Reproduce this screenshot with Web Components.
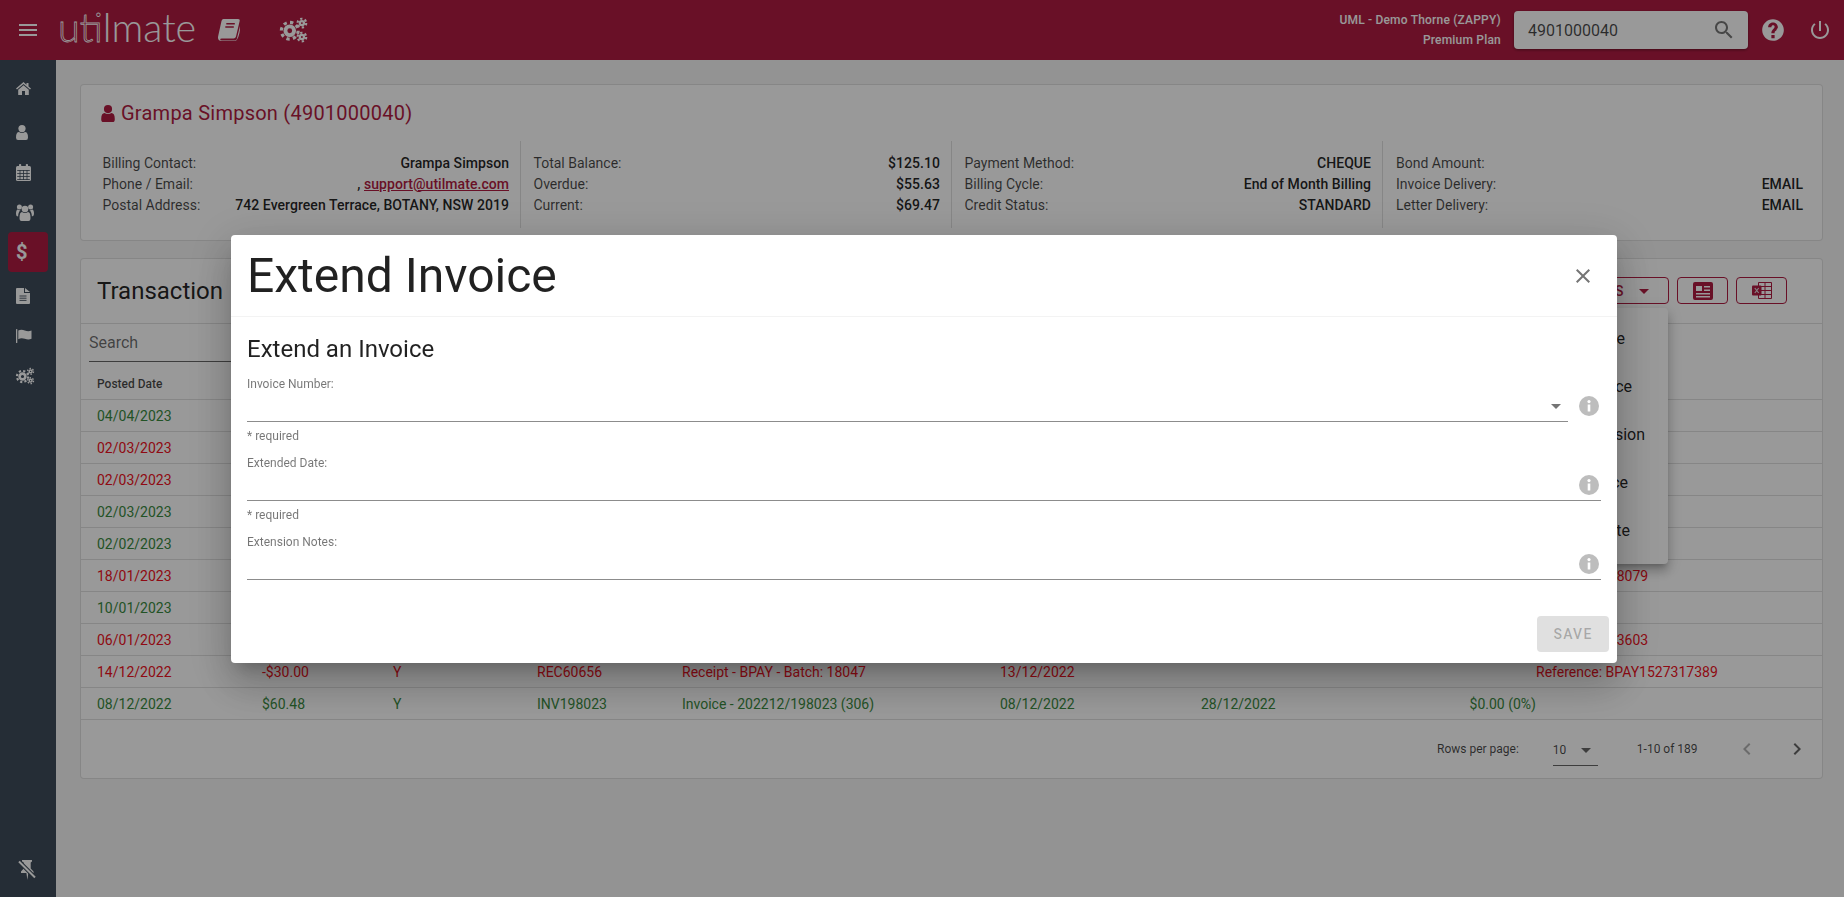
<!DOCTYPE html>
<html lang="en"><head><meta charset="utf-8"><title>Utilmate</title>
<style>
html,body{margin:0;height:100%;overflow:hidden;background:#f5f5f5;font-family:Roboto,"Liberation Sans",sans-serif;color:rgba(0,0,0,.87)}
</style></head><body>
<um-app></um-app>
<script>
const THEME='#b01c42', NAVBG='#3e4b5a';
const cog=(cx,cy,r,sw,tr,tw,n)=>{const c=2*Math.PI*tr,d=(c/n/2).toFixed(2);return `<circle cx="${cx}" cy="${cy}" r="${r}" fill="none" stroke="currentColor" stroke-width="${sw}"/><circle cx="${cx}" cy="${cy}" r="${tr}" fill="none" stroke="currentColor" stroke-width="${tw}" stroke-dasharray="${d} ${d}"/>`};
const ICONS={
menu:['0 0 24 24','<path d="M3 18h18v-2H3v2zm0-5h18v-2H3v2zm0-7v2h18V6H3z"/>'],
book:['0 0 22 22',`<path d="M5.500 0H20q2.200 0 1.600 2.200L18 17.500q-.5 2-2.500 2H3.800q-1.800 0-1.600 1 .2.900 1.600.9H17q1.300 0 1.800-1.400L22 7q.3 8-3 13.500-.8 1.500-2.500 1.500H3.500Q.3 22 0 19q-.1-1 .3-2.500L3.500 2Q4 0 5.500 0z"/><path d="M8.300 4.700h8.500M7.300 8h8.500" stroke="${THEME}" stroke-width="1.500" fill="none"/>`],
cogs:['0 0 18 16',cog(6.5,8.5,2.9,2.6,5.6,2.1,8)+cog(14.6,3.4,1.4,1.5,2.9,1.4,6)+cog(14.6,12.7,1.4,1.5,2.9,1.4,6)],
home:['0 0 15 13','<path d="M7.500 0 0 6.500l1 1L7.500 2 14 7.500l1-1-2.500-2.100V1h-2v1.700zM2.200 7.800V13H6V9h3v4h3.800V7.800L7.500 3.200z"/>'],
user:['0 0 12 15','<circle cx="6" cy="3.600" r="3.600"/><path d="M0 12.500Q0 7 3 7q1.200 1 3 1t3-1q3 0 3 5.500 0 2.500-2 2.500H2q-2 0-2-2.500z"/>'],
calendar:['0 0 15 17',`<rect y="2" width="15" height="15" rx="1.500"/><rect x="3" width="2.200" height="4" rx=".8"/><rect x="9.800" width="2.200" height="4" rx=".8"/><path d="M1.200 6.500h12.600M1.200 9.500h12.600M1.200 12.500h12.600M1.200 15.500h12.600M4 6v10M7.500 6v10M11 6v10" stroke="${NAVBG}" stroke-width=".8" fill="none"/>`],
users:['0 0 18 17','<circle cx="9" cy="5" r="3.300"/><circle cx="3.400" cy="3" r="2.500"/><circle cx="14.600" cy="3" r="2.500"/><path d="M3.500 14q0-6 2.500-6 1.300 1 3 1t3-1q2.500 0 2.500 6 0 3-2 3H5.500q-2 0-2-3z"/><path d="M0 10q0-4.500 1.800-4.500 1 .8 2.800.6-1 .9-1.600 2.100-.8 1.600-.9 4.300Q0 12.500 0 10zM18 10q0-4.500-1.800-4.500-1 .8-2.800.6 1 .9 1.600 2.100.8 1.600.9 4.300 2.100-.3 2.100-2.500z"/>'],
file:['0 0 14 16',`<path d="M0 1q0-1 1-1h7v5h6v10q0 1-1 1H1q-1 0-1-1zM9 0l5 4H9z"/><path d="M3.500 8h7M3.500 10.200h7M3.500 12.400h7" stroke="${NAVBG}" stroke-width=".9" fill="none"/>`],
flag:['0 0 16 14','<rect width="1.300" height="14" rx=".5"/><path d="M2.300 1.500q3-1.500 6.500 0t6.700 0v8.300q-3 1.500-6.700 0t-6.500.5z"/>'],
pin:['0 0 18 20',`<path d="M4 0h10v1.600l-1.300.8v6l2.800 3.200v1.300h-5.200L9.400 20l-1-7.100H3v-1.300l2.700-3.200v-6L4 1.600z"/><path d="M1 1.500l16 16" stroke="${NAVBG}" stroke-width="4" fill="none"/><path d="M1 1.500l16 16" stroke="currentColor" stroke-width="2" fill="none"/>`],
search:['0 0 24 24','<path d="M15.500 14h-.79l-.28-.27C15.410 12.590 16 11.110 16 9.500 16 5.910 13.090 3 9.500 3S3 5.910 3 9.500 5.910 16 9.500 16c1.610 0 3.090-.59 4.230-1.570l.27.28v.79l5 4.990L20.490 19l-4.990-5zm-6 0C7.010 14 5 11.990 5 9.500S7.010 5 9.500 5 14 7.010 14 9.500 11.990 14 9.500 14z"/>'],
help:['0 0 24 24','<path d="M12 2C6.480 2 2 6.480 2 12s4.480 10 10 10 10-4.480 10-10S17.520 2 12 2zm1.500 17.500h-3v-3h3v3zm2.070-7.750l-.9.920C13.450 13.400 13.500 14 13.500 15h-3v-.5c0-1.100.45-2.100 1.170-2.830l1.240-1.260c.37-.36.59-.86.59-1.410 0-1.100-.9-1.500-1.500-1.500s-1.500.4-1.500 2h-3c0-3.210 2.290-4.500 4.500-4.500s4.500 1.790 4.500 4.500c0 .88-.86 1.680-1.430 2.250z"/>'],
power:['0 0 24 24','<path d="M13 3h-2v10h2V3zm4.830 2.170l-1.420 1.420C17.990 7.860 19 9.810 19 12c0 3.870-3.130 7-7 7s-7-3.130-7-7c0-2.190 1.010-4.140 2.580-5.420L6.170 5.170C4.230 6.820 3 9.260 3 12c0 4.970 4.030 9 9 9s9-4.030 9-9c0-2.740-1.230-5.180-3.170-6.830z"/>'],
close:['0 0 24 24','<path d="M19 6.410L17.590 5 12 10.590 6.410 5 5 6.410 10.590 12 5 17.590 6.410 19 12 13.410 17.590 19 19 17.590 13.410 12z"/>'],
info:['0 0 20 20','<circle cx="10" cy="10" r="10" fill="#bdbdbd"/><circle cx="10" cy="5.600" r="1.600" fill="#fff"/><rect x="8.700" y="8.500" width="2.600" height="7" fill="#fff"/>'],
caret:['0 0 24 24','<path d="M7 10l5 5 5-5z"/>'],
chevl:['0 0 24 24','<path d="M15.410 7.410L14 6l-6 6 6 6 1.410-1.410L10.830 12z"/>'],
chevr:['0 0 24 24','<path d="M10 6L8.590 7.410 13.170 12l-4.580 4.580L10 18l6-6z"/>'],
news:['0 0 20 18','<path fill-rule="evenodd" d="M2 0h16q2 0 2 2v14q0 2-2 2H2q-2 0-2-2V2q0-2 2-2zm1 4v5h6V4zm8 0v1.500h6V4zm0 3.500V9h6V7.500zM3 11v1.500h14V11zm0 3v1.500h14V14z"/>'],
excel:['0 0 20 17','<path fill="none" stroke="currentColor" stroke-width="1" d="M6.500.5h13v16h-13zM6.500 4.500h13M6.500 8.500h13M6.500 12.500h13M13 .5v16"/><rect y="3.500" width="9.500" height="10" rx="1"/><path d="M2.800 6l3.900 5M6.700 6l-3.900 5" stroke="#ddd" stroke-width="1.200" fill="none"/>']
};
const def=(name,html,mixin={})=>{
  const t=document.createElement('template');t.innerHTML=html;
  customElements.define(name,class extends HTMLElement{
    constructor(){super();this.attachShadow({mode:'open'}).appendChild(t.content.cloneNode(true))}
    connectedCallback(){mixin.init&&mixin.init.call(this,this.shadowRoot)}
  });
};
def('um-icon','<style>:host{display:inline-flex;line-height:0;flex:none}svg{display:block;fill:currentColor;overflow:visible}</style><svg></svg>',{init(r){
  const s=r.querySelector('svg'),[vb,body]=ICONS[this.getAttribute('name')];
  s.setAttribute('viewBox',vb);s.setAttribute('width',this.getAttribute('w'));s.setAttribute('height',this.getAttribute('h')||this.getAttribute('w'));s.innerHTML=body;
}});
def('um-topbar',`<style>
:host{display:flex;align-items:center;height:60px;background:${THEME};color:#fff;box-sizing:border-box;font-family:Roboto,sans-serif}
.ham{margin-left:16px}
.logo{margin-left:18px;font:300 39.500px/60px Lato,sans-serif;letter-spacing:0;width:140px;height:60px;margin-top:-6px;white-space:nowrap;color:#fff}
.logo b{font-weight:300;color:transparent;-webkit-text-stroke:.8px #fff}
.book{margin-left:20px}.cogs{margin-left:40px}
.sp{flex:1}
.acct{text-align:right;font:500 12px/20px Roboto,sans-serif;letter-spacing:.2px;margin-right:13px}
.search{width:234px;height:38px;box-sizing:border-box;background:#fff;border-radius:4px;box-shadow:0 1px 3px rgba(0,0,0,.4);display:flex;align-items:center;padding:0 12px 0 14px;color:rgba(0,0,0,.72);font-size:16px}
.search span{flex:1}.search um-icon{color:#777}
.help{margin-left:12px}.pow{margin-left:22px;margin-right:12px}
</style>
<um-icon class="ham" name="menu" w="24"></um-icon>
<div class="logo"><b>uti</b>lmate</div>
<um-icon class="book" name="book" w="22"></um-icon>
<um-icon class="cogs" name="cogs" w="27" h="24"></um-icon>
<div class="sp"></div>
<div class="acct">UML - Demo Thorne (ZAPPY)<br>Premium Plan</div>
<div class="search"><span>4901000040</span><um-icon name="search" w="24"></um-icon></div>
<um-icon class="help" name="help" w="26"></um-icon>
<um-icon class="pow" name="power" w="24"></um-icon>`);
def('um-nav-item',`<style>
:host{display:flex;align-items:center;width:40px;height:40px;box-sizing:border-box;margin-left:8px;padding-left:8px;border-radius:4px;color:#fff}
:host([active]){background:${THEME}}
</style><slot></slot>`);
def('um-sidenav',`<style>
:host{display:flex;flex-direction:column;width:56px;background:${NAVBG};padding-top:8px;box-sizing:border-box;height:100%}
.sp{flex:1}.pin{margin:0 0 17px 18px;color:#fff}
</style><slot></slot><div class="sp"></div><um-icon class="pin" name="pin" w="18" h="20"></um-icon>`);
def('um-kv',`<style>
:host{display:flex;justify-content:space-between;font-size:14px;line-height:21px;color:rgba(0,0,0,.72);white-space:nowrap}
.v{font-weight:500;color:rgba(0,0,0,.87);letter-spacing:.05px}
</style><span><slot name="k"></slot></span><span class="v"><slot></slot></span>`);
def('um-info-col',`<style>
:host{display:block;box-sizing:border-box;padding:12px 11px 12px 12.500px;border-right:1px solid rgba(0,0,0,.12)}
:host(:last-child){border-right:0;padding-left:13px}
</style><slot></slot>`);
def('um-card',`<style>
:host{display:block;background:#fff;border:1px solid rgba(0,0,0,.12);border-radius:4px;box-sizing:border-box}
</style><slot></slot>`);
def('um-customer',`<style>
:host{display:block}
h2{margin:0;display:flex;align-items:center;gap:6px;padding:14px 0 0 20px;font:400 20px/28px Roboto,sans-serif;letter-spacing:.24px;color:${THEME}}
.g{display:grid;grid-template-columns:repeat(4,431px);margin:13.500px 0 12px 9px}
a{color:${THEME};text-decoration:underline}
</style>
<um-card>
<h2><um-icon name="user" w="14" h="17"></um-icon>Grampa Simpson (4901000040)</h2>
<div class="g">
<um-info-col>
<um-kv><span slot="k">Billing Contact:</span>Grampa Simpson</um-kv>
<um-kv><span slot="k">Phone / Email:</span>, <a>support@utilmate.com</a></um-kv>
<um-kv><span slot="k">Postal Address:</span>742 Evergreen Terrace, BOTANY, NSW 2019</um-kv>
</um-info-col>
<um-info-col>
<um-kv><span slot="k">Total Balance:</span>$125.10</um-kv>
<um-kv><span slot="k">Overdue:</span>$55.63</um-kv>
<um-kv><span slot="k">Current:</span>$69.47</um-kv>
</um-info-col>
<um-info-col>
<um-kv><span slot="k">Payment Method:</span>CHEQUE</um-kv>
<um-kv><span slot="k">Billing Cycle:</span>End of Month Billing</um-kv>
<um-kv><span slot="k">Credit Status:</span>STANDARD</um-kv>
</um-info-col>
<um-info-col>
<um-kv><span slot="k">Bond Amount:</span></um-kv>
<um-kv><span slot="k">Invoice Delivery:</span>EMAIL</um-kv>
<um-kv><span slot="k">Letter Delivery:</span>EMAIL</um-kv>
</um-info-col>
</div></um-card>`);
def('um-tx-row',`<style>
:host{display:grid;grid-template-columns:165px 131px 144px 145px 318px 201px 152px 183px 181px;height:32px;align-items:center;box-sizing:border-box;border-bottom:1px solid rgba(0,0,0,.12);padding-left:16px;font-size:14px;white-space:nowrap;color:#3a8a3f}
:host([tone=red]){color:#ee1122}
span:nth-child(9){text-align:right}
</style>`,{init(r){
  (this.getAttribute('cells')||'').split('|').forEach(c=>{const s=document.createElement('span');s.textContent=c;r.appendChild(s)});
}});
def('um-outline-btn',`<style>
:host{display:inline-flex;align-items:center;justify-content:center;height:27px;box-sizing:border-box;border:1px solid ${THEME};border-radius:4px;color:${THEME};min-width:51px;font:500 14px Roboto,sans-serif;letter-spacing:.4px}
</style><slot></slot>`);
def('um-menu',`<style>
:host{position:absolute;right:154px;top:49px;width:190px;height:256px;box-sizing:border-box;background:#fff;border-radius:4px;box-shadow:0 5px 5px -3px rgba(0,0,0,.2),0 8px 10px 1px rgba(0,0,0,.14),0 3px 14px 2px rgba(0,0,0,.12);padding-top:7px;display:flex;flex-direction:column;font-size:16px;text-align:right;white-space:nowrap;z-index:2}
div{height:48px;line-height:48px}
</style>
<div style="padding-right:43px">Add Charge</div>
<div style="padding-right:36px">Add Invoice</div>
<div style="padding-right:23px">Payment Extension</div>
<div style="padding-right:40px">Reverse Invoice</div>
<div style="padding-right:38px">Add Credit Note</div>`);
def('um-transactions',`<style>
:host{display:block;margin-top:17px}
um-card{position:relative}
.hd{display:flex;align-items:center;height:64px;border-bottom:1px solid rgba(0,0,0,.12);padding:0 35px 0 16px;gap:8px}
h3{margin:0;flex:1;font:400 24px/32px Roboto,sans-serif;white-space:nowrap;overflow:hidden}
.act{padding:0 12px 0 16px;gap:8px}
.srch{height:37px;margin-left:8px;width:400px;border-bottom:1px solid rgba(0,0,0,.6);font-size:16px;line-height:38px;color:rgba(0,0,0,.58)}
.th{height:38.500px;display:flex;align-items:center;padding:7px 16px 0 16px;font:500 12px Roboto,sans-serif;color:rgba(0,0,0,.72);border-bottom:1px solid rgba(0,0,0,.12);box-sizing:border-box}
.ft{height:58px;display:flex;align-items:center;font-size:12px;color:rgba(0,0,0,.72);padding-left:1356px}
.sel{margin-left:34px;width:45px;height:32px;box-sizing:border-box;border-bottom:1px solid rgba(0,0,0,.6);display:flex;align-items:center;justify-content:space-between;margin-top:2px}
.sel um-icon{margin-right:0;color:rgba(0,0,0,.6)}
.cnt{margin-left:39px}.l{margin-left:37px;color:rgba(0,0,0,.3)}.r{margin-left:26px;color:rgba(0,0,0,.6)}
</style>
<um-card>
<div class="hd"><h3>Transaction</h3>
<um-outline-btn class="act">ACTIONS<um-icon name="caret" w="24"></um-icon></um-outline-btn>
<um-outline-btn><um-icon name="news" w="20" h="18"></um-icon></um-outline-btn>
<um-outline-btn><um-icon name="excel" w="20" h="17"></um-icon></um-outline-btn>
</div>
<um-menu></um-menu>
<div class="srch">Search</div>
<div class="th">Posted Date</div>
<um-tx-row cells="04/04/2023"></um-tx-row>
<um-tx-row tone="red" cells="02/03/2023||||||||620023"></um-tx-row>
<um-tx-row tone="red" cells="02/03/2023||||||||620024"></um-tx-row>
<um-tx-row cells="02/03/2023"></um-tx-row>
<um-tx-row cells="02/02/2023"></um-tx-row>
<um-tx-row tone="red" cells="18/01/2023||||||||BPAY1556838079"></um-tx-row>
<um-tx-row cells="10/01/2023"></um-tx-row>
<um-tx-row tone="red" cells="06/01/2023||||||||BPAY1547003603"></um-tx-row>
<um-tx-row tone="red" cells="14/12/2022|-$30.00|Y|REC60656|Receipt - BPAY - Batch: 18047|13/12/2022|||Reference: BPAY1527317389"></um-tx-row>
<um-tx-row cells="08/12/2022|$60.48|Y|INV198023|Invoice - 202212/198023 (306)|08/12/2022|28/12/2022|$0.00 (0%)"></um-tx-row>
<div class="ft"><span>Rows per page:</span>
<div class="sel"><span>10</span><um-icon name="caret" w="24"></um-icon></div>
<span class="cnt">1-10 of 189</span>
<um-icon class="l" name="chevl" w="24"></um-icon><um-icon class="r" name="chevr" w="24"></um-icon>
</div>
</um-card>`);
def('um-field',`<style>
:host{display:block;margin-top:13px;color:rgba(0,0,0,.54);font-size:12px}
:host(:first-of-type){margin-top:12px}
label{display:block;line-height:14px}
.wrap{display:flex;align-items:flex-end}
.row{flex:1;height:31px;box-sizing:border-box;border-bottom:1px solid rgba(0,0,0,.45);display:flex;align-items:center;justify-content:flex-end}
.row um-icon{margin-right:2px}
.out{display:none;margin:0 2px 6px 11px}
:host([select]) .out{display:block}
:host([select]) .in{display:none}
.caret{display:none;color:#757575;margin-right:0!important}
:host([select]) .caret{display:block}
.hint{line-height:14px;margin-top:7px}
</style>
<label></label>
<div class="wrap"><div class="row"><um-icon class="caret" name="caret" w="24"></um-icon><um-icon class="in" name="info" w="20"></um-icon></div><um-icon class="out" name="info" w="20"></um-icon></div>
<div class="hint"></div>`,{init(r){
  r.querySelector('label').textContent=this.getAttribute('label');
  const h=r.querySelector('.hint');
  if(this.hasAttribute('required'))h.textContent='* required';else h.style.display='none';
}});
def('um-dialog',`<style>
:host{position:fixed;inset:0;background:rgba(0,0,0,.4);display:flex;align-items:center;justify-content:center;padding-left:4px;z-index:10}
.d{width:1386px;height:428px;background:#fff;border-radius:4px;box-sizing:border-box;box-shadow:0 11px 15px -7px rgba(0,0,0,.2),0 24px 38px 3px rgba(0,0,0,.14),0 9px 46px 8px rgba(0,0,0,.12);display:flex;flex-direction:column}
.t{height:82px;flex:none;box-sizing:border-box;border-bottom:1px solid #f3f3f3;display:flex;align-items:center;padding:2px 22px 0 16px}
h1{margin:0;flex:1;font:400 48px/56px Roboto,sans-serif}
.t um-icon{color:#757575}
.b{padding:16px 16px 0;flex:1}
h2{margin:0;font:400 24px/32px Roboto,sans-serif;letter-spacing:0}
.a{display:flex;justify-content:flex-end;padding:0 8px 11px}
.s{width:72px;height:36px;border-radius:4px;background:#e0e0e0;color:rgba(0,0,0,.26);font:500 14px/36px Roboto,sans-serif;letter-spacing:1.250px;text-align:center}
</style>
<div class="d" role="dialog">
<div class="t"><h1>Extend Invoice</h1><um-icon name="close" w="24"></um-icon></div>
<div class="b"><h2>Extend an Invoice</h2>
<um-field select required label="Invoice Number:"></um-field>
<um-field required label="Extended Date:"></um-field>
<um-field label="Extension Notes:"></um-field>
</div>
<div class="a"><div class="s">SAVE</div></div>
</div>`);
def('um-app',`<style>
:host{display:grid;grid-template-columns:56px 1fr;grid-template-rows:60px 1fr;height:100vh;background:#f5f5f5;font-family:Roboto,"Liberation Sans",sans-serif;color:rgba(0,0,0,.87);overflow:hidden}
um-topbar{grid-column:1/3}
main{padding:24px 21px 0 24px;min-width:0}
.m4{margin-top:4px}
um-nav-item.h{align-items:flex-start;padding-top:14px;height:44px}
</style>
<um-topbar></um-topbar>
<um-sidenav>
<um-nav-item class="h"><um-icon name="home" w="15" h="13"></um-icon></um-nav-item>
<um-nav-item><um-icon name="user" w="12" h="15"></um-icon></um-nav-item>
<um-nav-item><um-icon name="calendar" w="15" h="17"></um-icon></um-nav-item>
<um-nav-item><um-icon name="users" w="18" h="17"></um-icon></um-nav-item>
<um-nav-item active><b style="font:700 20px/1 Roboto,sans-serif">$</b></um-nav-item>
<um-nav-item class="m4"><um-icon name="file" w="14" h="16"></um-icon></um-nav-item>
<um-nav-item><um-icon name="flag" w="16" h="14"></um-icon></um-nav-item>
<um-nav-item><um-icon name="cogs" w="18" h="16"></um-icon></um-nav-item>
</um-sidenav>
<main><um-customer></um-customer><um-transactions></um-transactions></main>
<um-dialog></um-dialog>`);
</script>
</body></html>
